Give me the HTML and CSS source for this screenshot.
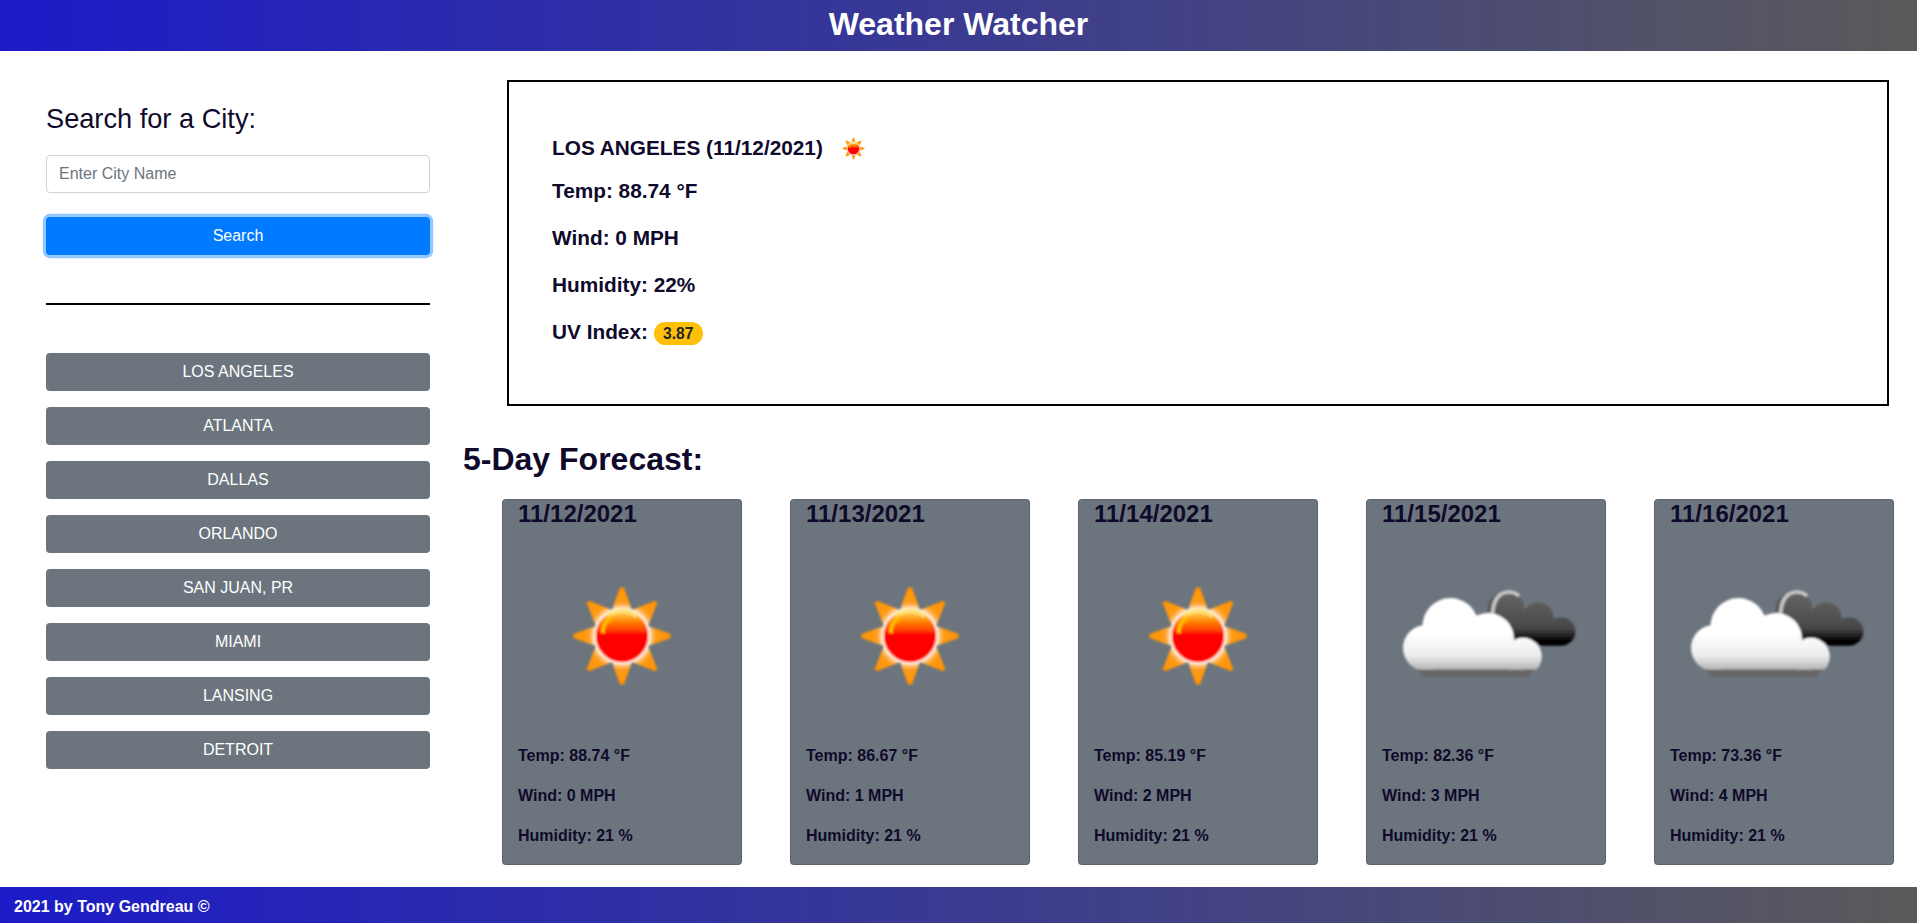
FILE: index.html
```html
<!DOCTYPE html>
<html lang="en">
<head>
<meta charset="utf-8">
<title>Weather Watcher</title>
<link rel="stylesheet" href="styles.css">
</head>
<body>
<svg class="defs" width="0" height="0" aria-hidden="true">
  <defs>
    <radialGradient id="ray" gradientUnits="userSpaceOnUse" cx="100" cy="100" r="50">
      <stop offset="0.58" stop-color="#ffc680"/><stop offset="0.68" stop-color="#ff9a14"/><stop offset="1" stop-color="#ff9200"/>
    </radialGradient>
    <linearGradient id="disc" x1="0" y1="0" x2="0" y2="1">
      <stop offset="0" stop-color="#ffd84a"/><stop offset="0.14" stop-color="#ffb030"/><stop offset="0.24" stop-color="#ff8200"/><stop offset="0.38" stop-color="#ff4a00"/><stop offset="0.48" stop-color="#ff0000"/><stop offset="1" stop-color="#ff0000"/>
    </linearGradient>
    <linearGradient id="white" gradientUnits="userSpaceOnUse" x1="0" y1="61" x2="0" y2="134">
      <stop offset="0" stop-color="#fff"/><stop offset="0.5" stop-color="#fff"/><stop offset="0.8" stop-color="#ececec"/><stop offset="1" stop-color="#b4b4b4"/>
    </linearGradient>
    <linearGradient id="dark" gradientUnits="userSpaceOnUse" x1="0" y1="53" x2="0" y2="109">
      <stop offset="0" stop-color="#686868"/><stop offset="0.7" stop-color="#484848"/><stop offset="0.93" stop-color="#000"/><stop offset="1" stop-color="#000"/>
    </linearGradient>
    <clipPath id="flat"><rect x="0" y="0" width="200" height="133.500"/></clipPath>
    <filter id="soft" x="-5%" y="-5%" width="110%" height="110%"><feGaussianBlur stdDeviation="1.2"/></filter>
    <symbol id="sun" viewBox="0 0 200 200">
      <g filter="url(#soft)">
        <g fill="url(#ray)">
          <path id="r" d="M91 74 V71 L98 51.500 H102 L109 71 V74Z"/>
          <use href="#r" transform="rotate(90 100 100)"/>
          <use href="#r" transform="rotate(180 100 100)"/><use href="#r" transform="rotate(270 100 100)"/>
          <path id="d" d="M89.500 75 L90 71 L98.500 51.500 H101.500 L110 71 L110.500 75Z" transform="rotate(45 100 100)"/>
          <use href="#d" transform="rotate(90 100 100)"/>
          <use href="#d" transform="rotate(180 100 100)"/><use href="#d" transform="rotate(270 100 100)"/>
        </g>
        <circle cx="100" cy="100" r="27.500" fill="url(#disc)" stroke="#fff0dc" stroke-width="2.600"/>
        <path d="M85 80 Q100 70 115 80" fill="none" stroke="#ffe27a" stroke-width="4.500"/>
        <path d="M81 97 Q80 87 91 80" fill="none" stroke="#ffb800" stroke-width="4"/>
      </g>
    </symbol>
    <symbol id="clouds" viewBox="0 0 200 200">
      <g filter="url(#soft)">
        <g fill="url(#dark)">
          <circle cx="120" cy="73" r="18.500"/><circle cx="152" cy="82" r="15.500"/>
          <circle cx="175" cy="95.500" r="14.300"/><path d="M103 75 H160 L175 90 V109.800 H120Z"/>
        </g>
        <path d="M106.500 80 Q107 58 121 56 Q129 55.500 133 60" fill="none" stroke="#c8c8c8" stroke-width="3.500"/>
        <path fill="#666" d="M31 131 H147 Q145 141 140 141 H40 Q35 141 31 131Z"/>
        <g fill="url(#white)" clip-path="url(#flat)">
          <circle cx="40" cy="112" r="23"/><circle cx="64.500" cy="90" r="28"/>
          <circle cx="102" cy="103" r="26"/><circle cx="137" cy="120.500" r="18.800"/>
          <path d="M38 95 H105 L137 110 V134 H36Z"/>
        </g>
      </g>
    </symbol>
  </defs>
</svg>
<header class="header"><h1>Weather Watcher</h1></header>
<main class="main">
  <aside class="sidebar">
    <h3>Search for a City:</h3>
    <input class="city-input" type="text" placeholder="Enter City Name">
    <button class="btn btn-search">Search</button>
    <hr>
    <div class="history">
      <button class="btn">LOS ANGELES</button>
      <button class="btn">ATLANTA</button>
      <button class="btn">DALLAS</button>
      <button class="btn">ORLANDO</button>
      <button class="btn">SAN JUAN, PR</button>
      <button class="btn">MIAMI</button>
      <button class="btn">LANSING</button>
      <button class="btn">DETROIT</button>
    </div>
  </aside>
  <section class="content">
    <div class="current">
      <div class="place"><h2>LOS ANGELES (11/12/2021)</h2><svg class="icon-small"><use href="#sun"/></svg></div>
      <p>Temp: 88.74 °F</p>
      <p>Wind: 0 MPH</p>
      <p>Humidity: 22%</p>
      <p>UV Index: <span class="badge">3.87</span></p>
    </div>
    <h2 class="forecast-title">5-Day Forecast:</h2>
    <div class="cards">
      <article class="card"><h4>11/12/2021</h4><svg class="icon"><use href="#sun"/></svg><p>Temp: 88.74 °F</p><p>Wind: 0 MPH</p><p>Humidity: 21 %</p></article>
      <article class="card"><h4>11/13/2021</h4><svg class="icon"><use href="#sun"/></svg><p>Temp: 86.67 °F</p><p>Wind: 1 MPH</p><p>Humidity: 21 %</p></article>
      <article class="card"><h4>11/14/2021</h4><svg class="icon"><use href="#sun"/></svg><p>Temp: 85.19 °F</p><p>Wind: 2 MPH</p><p>Humidity: 21 %</p></article>
      <article class="card"><h4>11/15/2021</h4><svg class="icon"><use href="#clouds"/></svg><p>Temp: 82.36 °F</p><p>Wind: 3 MPH</p><p>Humidity: 21 %</p></article>
      <article class="card"><h4>11/16/2021</h4><svg class="icon"><use href="#clouds"/></svg><p>Temp: 73.36 °F</p><p>Wind: 4 MPH</p><p>Humidity: 21 %</p></article>
    </div>
  </section>
</main>
<footer class="footer">2021 by Tony Gendreau ©</footer>
</body>
</html>
```
FILE: styles.css
```css
* { box-sizing: border-box; }
body {
  margin: 0;
  height: 923px;
  display: flex;
  flex-direction: column;
  background: #fff;
  color: #0f0a2b;
  font: 16px/24px "Liberation Sans", Arial, sans-serif;
}
h1, h2, h3, h4, p { margin: 0; }
.defs { display: block; width: 0; height: 0; flex: none; }
.header, .footer {
  flex: none;
  color: #fff;
  font-weight: 700;
  background: linear-gradient(90deg, #1b1bc9, #5a5a5a);
}
.header { height: 51px; padding-top: 4px; text-align: center; }
.header h1 { font-size: 32px; line-height: 40px; }
.footer { height: 36px; padding: 8px 14px 0; }
.main { flex: 1; display: flex; min-height: 0; }
.sidebar { width: 384px; margin-left: 46px; padding-top: 51px; }
.sidebar h3 { font-size: 27.2px; font-weight: 400; line-height: 34px; margin-bottom: 19px; }
.city-input {
  display: block;
  width: 100%;
  height: 38px;
  margin-bottom: 24px;
  padding: 6px 12px;
  border: 1px solid #ced4da;
  border-radius: 4px;
  font: inherit;
}
.city-input::placeholder { color: #6c757d; opacity: 1; }
.btn {
  display: block;
  width: 100%;
  height: 38px;
  padding: 0;
  border: 0;
  border-radius: 4px;
  background: #6c757d;
  color: #fff;
  font: inherit;
}
.btn-search { background: #007bff; box-shadow: 0 0 0 3.2px rgba(38, 143, 255, .5); }
.sidebar hr { margin: 48px 0; border: 0; border-top: 2px solid #000; }
.history { display: grid; gap: 16px; }
.content { width: 1431px; margin-left: 33px; padding-top: 29px; }
.current {
  width: 1382px;
  height: 326px;
  margin-left: 44px;
  padding: 50px 43px 0;
  border: 2px solid #000;
  font-size: 20.8px;
  font-weight: 700;
}
.place { display: flex; align-items: center; height: 31px; gap: 8.5px; }
.place h2 { font-size: inherit; }
.icon-small { width: 45px; height: 45px; margin-top: 2px; }
.current p { line-height: 25px; margin: 15px 0 22px; }
.current p + p { margin-top: 0; }
.badge {
  display: inline-block;
  padding: 4px 9.4px;
  border-radius: 160px;
  background: #ffc107;
  color: #212529;
  font-size: 15.6px;
  line-height: 15px;
}
.forecast-title { margin: 33px 0 20px; font-size: 32px; line-height: 40px; }
.cards { display: flex; gap: 48px; margin-left: 39px; }
.card {
  width: 240px;
  height: 366px;
  padding: 0 15px;
  border: 1px solid rgba(0, 0, 0, .125);
  border-radius: 4px;
  background: #6c757d;
  font-weight: 700;
}
.card h4 { font-size: 24px; line-height: 27px; }
.icon { display: block; width: 200px; height: 200px; margin: 9px 0 7px 4px; }
.card p { margin: 0 0 16px; }
.card p:first-of-type { margin-top: 8px; }
```
